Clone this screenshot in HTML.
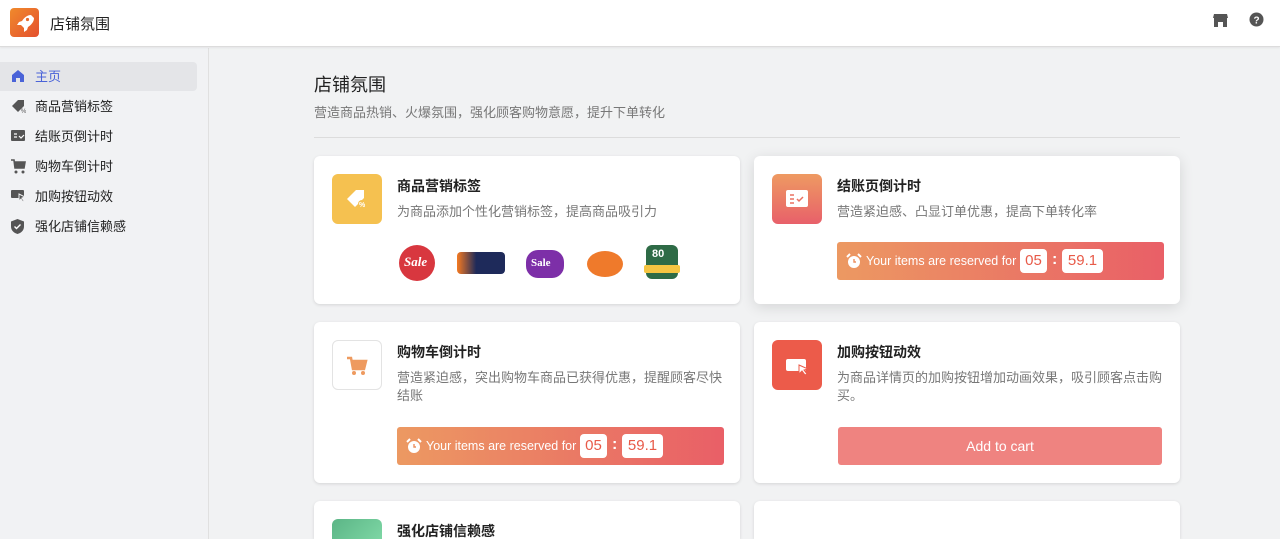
<!DOCTYPE html>
<html><head><meta charset="utf-8"><style>
*{box-sizing:border-box;margin:0;padding:0}
html,body{width:1280px;height:539px;overflow:hidden}
body{background:#f1f2f3;font-family:"Liberation Sans","Noto Sans CJK SC",sans-serif;position:relative}
.hdr{position:absolute;left:0;top:0;width:1280px;height:47px;background:#fff;border-bottom:1px solid #dcdcdc;box-shadow:0 1px 2px rgba(0,0,0,.06);z-index:2}
.logo{position:absolute;left:10px;top:8px;width:29px;height:29px;border-radius:4px;background:linear-gradient(135deg,#f08a2c,#e4502e)}
.hdr .t{position:absolute;left:50px;top:13px;font-size:15px;color:#222}
.side{position:absolute;left:0;top:48px;width:209px;height:491px;background:#f1f2f4;border-right:1px solid #e0e0e0}
.it{position:absolute;left:0;width:197px;height:29px;font-size:13px;color:#222;line-height:29px;padding-left:35px}
.it svg{position:absolute;left:11px;top:7px}
.it.a{background:#e4e5e8;border-radius:0 4px 4px 0;color:#4a63d8}
h1{position:absolute;left:314px;top:71px;font-size:18px;font-weight:normal;color:#222}
.sub{position:absolute;left:314px;top:102px;font-size:13px;color:#777}
.div{position:absolute;left:314px;top:137px;width:866px;height:1px;background:#dcdcdc}
.card{position:absolute;background:#fff;border-radius:6px;box-shadow:0 1px 3px rgba(0,0,0,.12)}
.ic{position:absolute;left:18px;top:18px;width:50px;height:50px;border-radius:6px}
.ct{position:absolute;left:83px;top:20px;font-size:14px;color:#222;font-weight:bold}
.cd{position:absolute;left:83px;top:47px;font-size:13px;color:#777;line-height:18px;width:330px}
.ban{position:absolute;left:83px;width:327px;height:38px;border-radius:3px;background:linear-gradient(90deg,#ec9962,#e95f67);color:#fff;font-size:12.5px}
.ban .tx{position:absolute;left:29px;top:12px}
.ban .b{position:absolute;top:7px;height:24px;background:#fff;border-radius:4px;color:#e85a48;font-size:15px;line-height:24px;text-align:center}
.ban .c{position:absolute;top:9px;font-size:16px;font-weight:bold}
.badge{position:absolute;top:89px;width:36px;height:36px;border-radius:50%}
</style></head><body>
<div class="hdr"><div class="logo"><svg width="29" height="29" viewBox="0 0 29 29"><path d="M21 7c-4 0-7 3-9 6l-3 1-2 3 4 0 3 3 0 4 3-2 1-3c3-2 6-5 6-9z" fill="#fff"/><circle cx="17.5" cy="11.5" r="1.6" fill="#e86a2d"/></svg></div><div class="t">店铺氛围</div>
<svg style="position:absolute;left:1213px;top:13px" width="15" height="14" viewBox="0 0 15 14"><path d="M1 1h13l1 4H0z M1 5h13v9h-4V9H5v5H1z" fill="#555"/></svg>
<svg style="position:absolute;left:1249px;top:12px" width="15" height="15" viewBox="0 0 15 15"><circle cx="7.5" cy="7.5" r="7" fill="#555"/><text x="7.5" y="11.5" font-size="10" font-weight="bold" fill="#fff" text-anchor="middle" font-family="Liberation Sans">?</text></svg>
</div>
<div class="side">
<div class="it a" style="top:14px"><svg width="14" height="14" viewBox="0 0 14 14"><path d="M7 1l6 5v7H9V9H5v4H1V6z" fill="#4a63d8"/></svg>主页</div>
<div class="it" style="top:44px"><svg width="15" height="14" viewBox="0 0 15 14"><path d="M1 7l6-6h6v6l-6 6z" fill="#555"/><text x="10" y="14" font-size="6" fill="#555">%</text></svg>商品营销标签</div>
<div class="it" style="top:74px"><svg width="14" height="13" viewBox="0 0 14 13"><rect x="0" y="1" width="14" height="11" rx="1" fill="#555"/><path d="M3 5h3M3 8h3M8 7l2 2 3-3" stroke="#fff" stroke-width="1.2" fill="none"/></svg>结账页倒计时</div>
<div class="it" style="top:104px"><svg width="15" height="15" viewBox="0 0 15 15"><path d="M0 1h3l1 8h9l1-6H4" fill="none" stroke="#555" stroke-width="1.6"/><rect x="4" y="3" width="9" height="6" fill="#555"/><circle cx="5" cy="13" r="1.5" fill="#555"/><circle cx="12" cy="13" r="1.5" fill="#555"/></svg>购物车倒计时</div>
<div class="it" style="top:134px"><svg width="15" height="14" viewBox="0 0 15 14"><rect x="0" y="1" width="13" height="8" rx="1" fill="#555"/><path d="M8 5l6 3-3 1 2 3-1 1-2-3-2 2z" fill="#555" stroke="#f1f2f4"/></svg>加购按钮动效</div>
<div class="it" style="top:164px"><svg width="13" height="15" viewBox="0 0 13 15"><path d="M6.5 0L13 2.5v5c0 4-3 6.5-6.5 7.5C3 14 0 11.5 0 7.5v-5z" fill="#555"/><path d="M3.5 7.5l2 2 4-4" stroke="#fff" stroke-width="1.4" fill="none"/></svg>强化店铺信赖感</div>
</div>
<h1>店铺氛围</h1>
<div class="sub">营造商品热销、火爆氛围，强化顾客购物意愿，提升下单转化</div>
<div class="div"></div>

<div class="card" style="left:314px;top:156px;width:426px;height:148px">
<div class="ic" style="background:#f5c150"><svg width="50" height="50"><path d="M15 25l9-9h8v8l-9 9z" fill="#fff"/><circle cx="30" cy="30" r="4" fill="#f5c150"/><text x="27" y="33" font-size="7" fill="#fff" font-weight="bold">%</text></svg></div>
<div class="ct">商品营销标签</div>
<div class="cd">为商品添加个性化营销标签，提高商品吸引力</div>
<div class="badge" style="left:85px;background:#d8373f"><span style="position:absolute;left:5px;top:9px;color:#fff;font:italic bold 13px Liberation Serif">Sale</span></div>
<div class="badge" style="left:143px;width:48px;border-radius:4px;height:22px;top:96px;background:linear-gradient(90deg,#f57a22,#1e2a5a 40%)"></div>
<div class="badge" style="left:212px;width:38px;height:28px;top:94px;border-radius:12px;background:#7d2fa8"><span style="position:absolute;left:5px;top:7px;color:#fff;font:bold 11px Liberation Serif">Sale</span></div>
<div class="badge" style="left:273px;width:36px;height:26px;top:95px;background:#ef7a2b"></div>
<div class="badge" style="left:332px;width:32px;height:34px;top:89px;border-radius:6px;background:#2e6b46"><span style="position:absolute;left:6px;top:3px;color:#fff;font:bold 11px Liberation Sans">80</span><span style="position:absolute;left:-2px;top:20px;width:36px;height:8px;background:#f5c542;border-radius:2px"></span></div>
</div>

<div class="card" style="left:754px;top:156px;width:426px;height:148px;box-shadow:0 3px 14px rgba(0,0,0,.12)">
<div class="ic" style="background:linear-gradient(180deg,#ee9a62,#e8606a)"><svg width="50" height="50"><rect x="14" y="16" width="22" height="17" rx="2" fill="#fff"/><path d="M18 21h4M18 25h4M18 29h4M25 25l2 2 4-4" stroke="#ea7060" stroke-width="1.5" fill="none"/></svg></div>
<div class="ct">结账页倒计时</div>
<div class="cd">营造紧迫感、凸显订单优惠，提高下单转化率</div>
<div class="ban" style="top:86px"><svg style="position:absolute;left:9px;top:11px" width="16" height="16" viewBox="0 0 16 16"><circle cx="8" cy="9" r="6" fill="#fff"/><path d="M1 4l3-3M15 4l-3-3" stroke="#fff" stroke-width="2"/><path d="M8 6v3h2" stroke="#ec9060" stroke-width="1.4" fill="none"/></svg><span class="tx">Your items are reserved for</span><span class="b" style="left:183px;width:27px">05</span><span class="c" style="left:215px">:</span><span class="b" style="left:225px;width:41px">59.1</span></div>
</div>

<div class="card" style="left:314px;top:322px;width:426px;height:161px">
<div class="ic" style="background:#fff;border:1px solid #e3e3e3"><svg width="50" height="50"><path d="M14 17h4l2 11h11l2-8H19" fill="none" stroke="#ee9a5f" stroke-width="2.5"/><rect x="19" y="20" width="13" height="7" fill="#ee9a5f"/><circle cx="21" cy="32" r="2" fill="#ee9a5f"/><circle cx="30" cy="32" r="2" fill="#ee9a5f"/></svg></div>
<div class="ct">购物车倒计时</div>
<div class="cd">营造紧迫感，突出购物车商品已获得优惠，提醒顾客尽快结账</div>
<div class="ban" style="top:105px"><svg style="position:absolute;left:9px;top:11px" width="16" height="16" viewBox="0 0 16 16"><circle cx="8" cy="9" r="6" fill="#fff"/><path d="M1 4l3-3M15 4l-3-3" stroke="#fff" stroke-width="2"/><path d="M8 6v3h2" stroke="#ec9060" stroke-width="1.4" fill="none"/></svg><span class="tx">Your items are reserved for</span><span class="b" style="left:183px;width:27px">05</span><span class="c" style="left:215px">:</span><span class="b" style="left:225px;width:41px">59.1</span></div>
</div>

<div class="card" style="left:754px;top:322px;width:426px;height:161px">
<div class="ic" style="background:#ec5b4a"><svg width="50" height="50"><rect x="14" y="19" width="20" height="12" rx="2" fill="#fff"/><path d="M27 25l9 4-4 1 3 4-2 1-3-4-3 3z" fill="#fff" stroke="#ec5b4a" stroke-width="1"/></svg></div>
<div class="ct">加购按钮动效</div>
<div class="cd">为商品详情页的加购按钮增加动画效果，吸引顾客点击购买。</div>
<div style="position:absolute;left:84px;top:105px;width:324px;height:38px;background:#ef8380;border-radius:3px;color:#fff;font-size:14px;text-align:center;line-height:38px">Add to cart</div>
</div>

<div class="card" style="left:314px;top:501px;width:426px;height:38px;border-radius:6px 6px 0 0;overflow:hidden">
<div class="ic" style="background:linear-gradient(135deg,#5bb586,#7dd6a4);height:20px;border-radius:6px 6px 0 0"></div>
<div class="ct">强化店铺信赖感</div>
</div>
<div class="card" style="left:754px;top:501px;width:426px;height:38px;border-radius:6px 6px 0 0"></div>
</body></html>
